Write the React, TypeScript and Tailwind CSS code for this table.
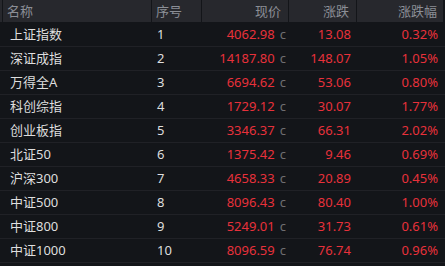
import React from "react";

const rows = [
  ["上证指数", "1", "4062.98", "13.08", "0.32%"],
  ["深证成指", "2", "14187.80", "148.07", "1.05%"],
  ["万得全A", "3", "6694.62", "53.06", "0.80%"],
  ["科创综指", "4", "1729.12", "30.07", "1.77%"],
  ["创业板指", "5", "3346.37", "66.31", "2.02%"],
  ["北证50", "6", "1375.42", "9.46", "0.69%"],
  ["沪深300", "7", "4658.33", "20.89", "0.45%"],
  ["中证500", "8", "8096.43", "80.40", "1.00%"],
  ["中证800", "9", "5249.01", "31.73", "0.61%"],
  ["中证1000", "10", "8096.59", "76.74", "0.96%"],
];

const font = { fontFamily: '"Noto Sans", "Noto Sans CJK SC", sans-serif' };

export default function App() {
  return (
    <div className="w-[445px] h-[266px] bg-[#131519] overflow-hidden text-[13px] leading-none" style={font}>
      <div className="flex h-[23px] text-[#8b8e96]">
        <div className="flex h-[22px] w-[443px] bg-[#27282d]">
          <div className="w-[3px] border-r border-[#131519]" />
          <div className="w-[149px] border-r border-[#131519] flex items-center pl-[4px]">名称</div>
          <div className="w-[50px] border-r border-[#131519] flex items-center pl-[4px]">序号</div>
          <div className="w-[87px] border-r border-[#131519] flex items-center justify-end pr-[7px]">现价</div>
          <div className="w-[68px] border-r border-[#131519] flex items-center justify-end pr-[7px]">涨跌</div>
          <div className="w-[86px] flex items-center justify-end pr-[6px]">涨跌幅</div>
        </div>
      </div>
      {rows.map((r) => (
        <div key={r[1]} className="flex h-[24px] border-b border-[#202126] items-center">
          <div className="w-[153px] pl-[10px] text-[#dedede]">{r[0]}</div>
          <div className="w-[50px] pl-[4px] text-[#dedede]">{r[1]}</div>
          <div className="w-[87px] flex justify-end items-baseline pr-[4px] text-[#e8313b]">
            <span>{r[2]}</span>
            <span className="ml-[5px] text-[#6e6e70]">c</span>
          </div>
          <div className="w-[68px] text-right pr-[7px] text-[#e8313b]">{r[3]}</div>
          <div className="w-[86px] text-right pr-[6px] text-[#e8313b]">{r[4]}</div>
        </div>
      ))}
    </div>
  );
}
